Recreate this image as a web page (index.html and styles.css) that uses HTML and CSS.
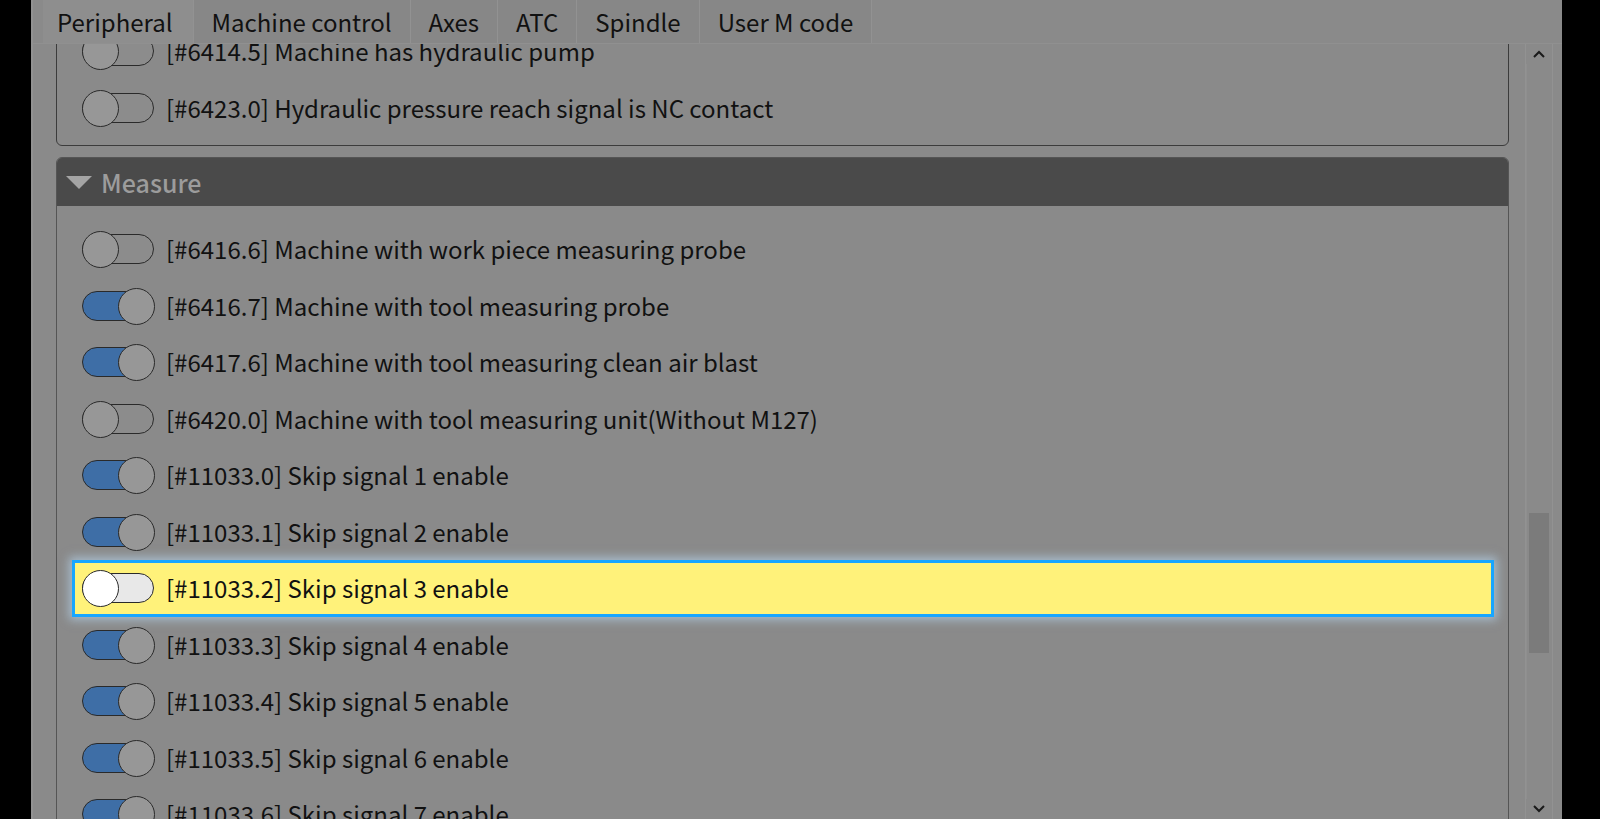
FILE: index.html
```html
<!DOCTYPE html>
<html lang="en">
<head>
    <meta charset="UTF-8">
    <meta name="viewport" content="width=device-width, initial-scale=1.0">
    <title>Machine parameters</title>
    <link rel="stylesheet" href="styles.css">
</head>
<body>
    <div class="app">
        <div class="tabs">
            <div class="tab active">Peripheral</div>
            <div class="tab">Machine control</div>
            <div class="tab">Axes</div>
            <div class="tab">ATC</div>
            <div class="tab">Spindle</div>
            <div class="tab">User M code</div>
        </div>

        <div class="page">
            <div class="scroll-view">
                <div class="scroll-content">

                    <div class="group plain">
                        <div class="row"><span class="toggle"></span><span class="label">[#6414.5] Machine has hydraulic pump</span></div>
                        <div class="row"><span class="toggle"></span><span class="label">[#6423.0] Hydraulic pressure reach signal is NC contact</span></div>
                    </div>

                    <div class="group">
                        <div class="group-header"><span class="caret"></span>Measure</div>
                        <div class="group-body">
                            <div class="row"><span class="toggle"></span><span class="label">[#6416.6] Machine with work piece measuring probe</span></div>
                            <div class="row"><span class="toggle on"></span><span class="label">[#6416.7] Machine with tool measuring probe</span></div>
                            <div class="row"><span class="toggle on"></span><span class="label">[#6417.6] Machine with tool measuring clean air blast</span></div>
                            <div class="row"><span class="toggle"></span><span class="label">[#6420.0] Machine with tool measuring unit(Without M127)</span></div>
                            <div class="row"><span class="toggle on"></span><span class="label">[#11033.0] Skip signal 1 enable</span></div>
                            <div class="row"><span class="toggle on"></span><span class="label">[#11033.1] Skip signal 2 enable</span></div>
                            <div class="row selected"><span class="toggle"></span><span class="label">[#11033.2] Skip signal 3 enable</span></div>
                            <div class="row"><span class="toggle on"></span><span class="label">[#11033.3] Skip signal 4 enable</span></div>
                            <div class="row"><span class="toggle on"></span><span class="label">[#11033.4] Skip signal 5 enable</span></div>
                            <div class="row"><span class="toggle on"></span><span class="label">[#11033.5] Skip signal 6 enable</span></div>
                            <div class="row"><span class="toggle on"></span><span class="label">[#11033.6] Skip signal 7 enable</span></div>
                        </div>
                    </div>

                </div>
            </div>

            <div class="scrollbar">
                <div class="sb-btn">
                    <svg width="12" height="8" viewBox="0 0 12 8"><polyline points="1,7 6,2 11,7" fill="none" stroke="#1a1a1a" stroke-width="2"/></svg>
                </div>
                <div class="sb-track">
                    <div class="sb-handle"></div>
                </div>
                <div class="sb-btn">
                    <svg width="12" height="8" viewBox="0 0 12 8"><polyline points="1,1 6,6 11,1" fill="none" stroke="#1a1a1a" stroke-width="2"/></svg>
                </div>
            </div>
        </div>
    </div>
</body>
</html>
```

FILE: styles.css
```css
*{
    margin: 0;
    padding: 0;
    box-sizing: border-box;
}

body{
    background-color: #000;
    height: 819px;
    overflow: hidden;
    font-family: "Noto Sans CJK SC", "Noto Sans", sans-serif;
    color: #111;
}

.app{
    margin-left: 31px;
    width: 1531px;
    height: 819px;
    background-color: #8a8a8a;
    border-left: 2px solid #929292;
    display: flex;
    flex-direction: column;
}

/* tab bar */
.tabs{
    height: 44px;
    display: flex;
    padding-left: 10px;
    border-bottom: 1px solid #909090;
}

.tab{
    padding: 4px 18px 0;
    font-size: 24px;
    line-height: 36px;
    background-color: #878787;
    border-right: 1px solid #929292;
}

.tab.active{
    background-color: #8e8e8e;
    padding: 4px 20px 0 14px;
}

/* scroll area */
.page{
    flex: 1;
    display: flex;
    min-height: 0;
}

.scroll-view{
    flex: 1;
    overflow: hidden;
    padding: 0 16px 0 23px;
}

.scroll-content{
    margin-top: -32px;
}

.group{
    border: 1px solid #555;
    border-radius: 6px;
    margin-bottom: 11px;
}

.group.plain{
    padding: 10px 0 9px;
    border-color: #3c3c3c;
}

.group-header{
    height: 48px;
    background-color: #4a4a4a;
    border-radius: 5px 5px 0 0;
    color: #9c9c9c;
    font-size: 25px;
    font-weight: 500;
    display: flex;
    align-items: center;
    padding-left: 9px;
}

.caret{
    width: 0;
    height: 0;
    border-left: 13px solid transparent;
    border-right: 13px solid transparent;
    border-top: 13px solid #a4a4a4;
    margin-right: 9px;
}

.group-body{
    padding-top: 15px;
}

/* rows */
.row{
    height: 56.5px;
    margin: 0 14px 0 15px;
    border: 3px solid transparent;
    display: flex;
    align-items: center;
    padding-left: 7px;
    font-size: 24px;
}

.row.selected{
    background-color: #fff27a;
    border-color: #18a6ff;
    box-shadow: 0 0 9px 3px rgba(190, 225, 255, 0.55);
}

.label{
    margin-left: 12px;
    line-height: 1;
    white-space: nowrap;
}

.toggle{
    position: relative;
    flex: none;
    width: 72px;
    height: 30px;
    border: 1.5px solid #2a2a2a;
    border-radius: 15px;
    background-color: #8c8c8c;
}

.toggle::after{
    content: "";
    position: absolute;
    top: -4px;
    left: -1.5px;
    width: 35px;
    height: 35px;
    border: 1.5px solid #2a2a2a;
    border-radius: 50%;
    background-color: #979797;
}

.toggle.on{
    background-color: #3e6ea6;
}

.toggle.on::after{
    left: auto;
    right: -1.5px;
}

.row.selected .toggle{
    background-color: #e8e8e8;
}

.row.selected .toggle::after{
    background-color: #fff;
}

/* scrollbar */
.scrollbar{
    width: 28px;
    margin-right: 9px;
    display: flex;
    flex-direction: column;
    border-left: 1px solid #929292;
    border-right: 1px solid #929292;
}

.sb-btn{
    height: 20px;
    display: flex;
    justify-content: center;
    align-items: center;
}

.sb-track{
    flex: 1;
    padding: 0 3px 0 2px;
    border-left: 1px solid #8f8f8f;
}

.sb-handle{
    margin-top: 449px;
    height: 140px;
    background-color: #7b7b7b;
}
```
